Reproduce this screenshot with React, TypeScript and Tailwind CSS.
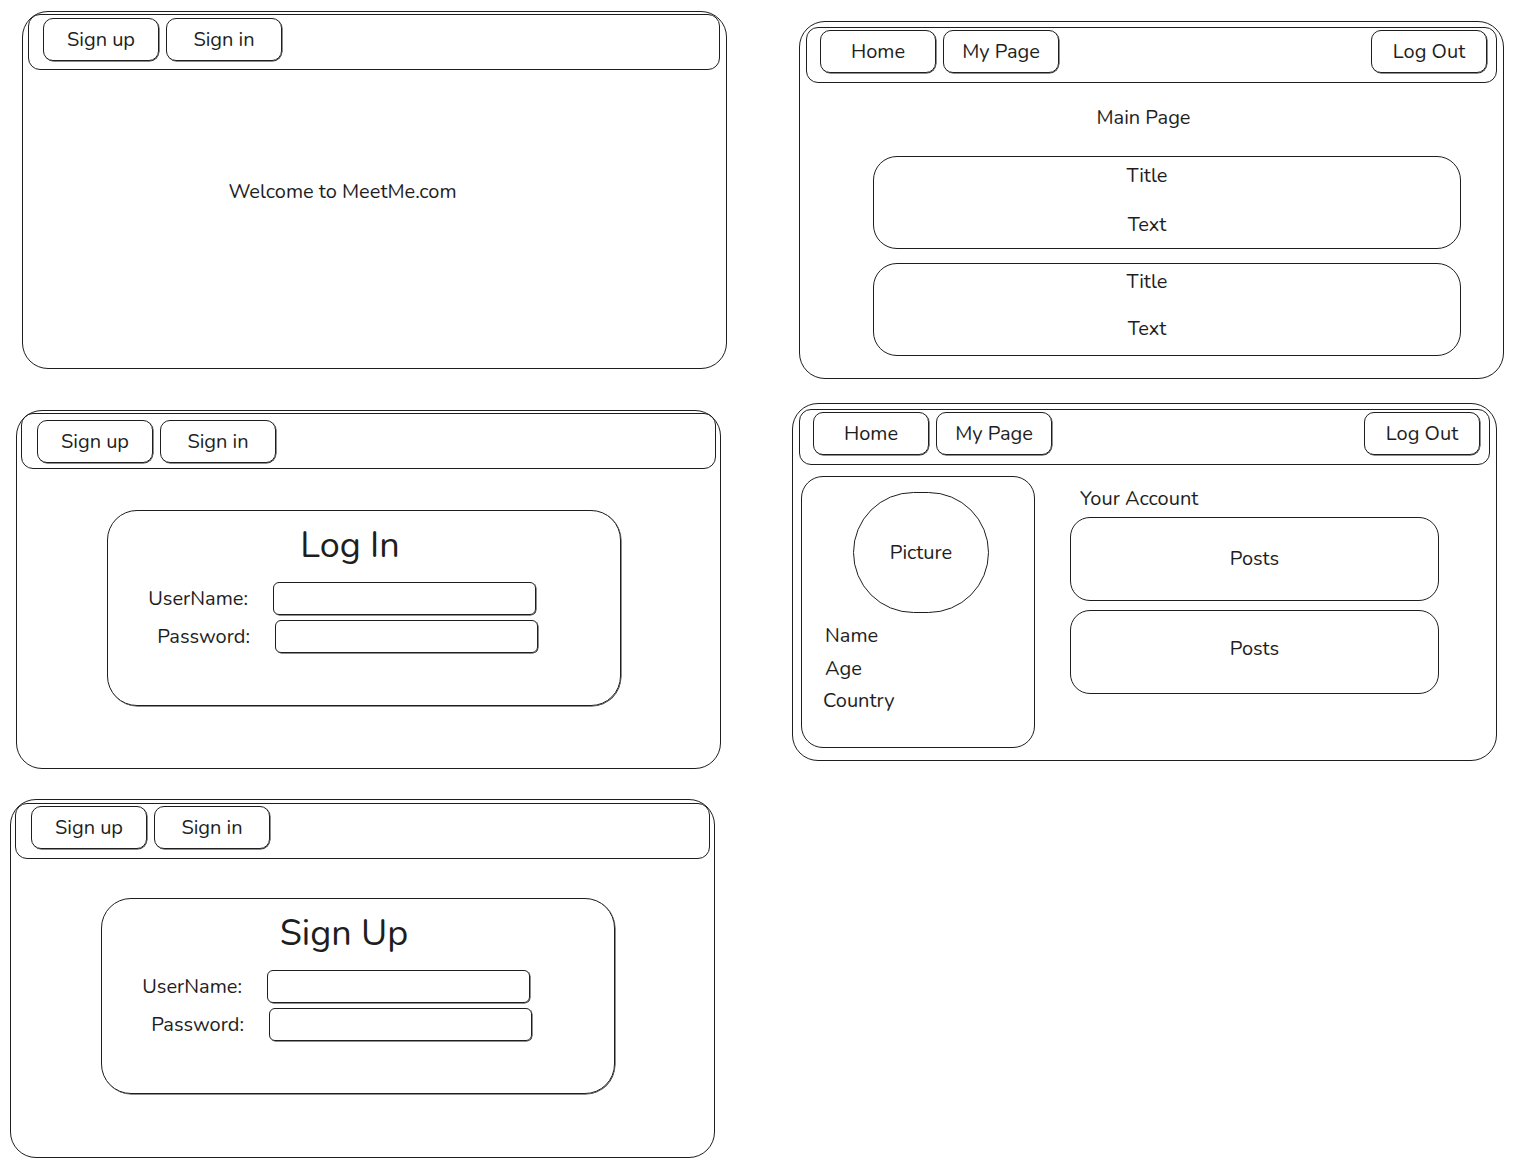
import React from "react";

const line = "border-[1.5px] border-[#1e1e1e]";

function NavButton({ label, className = "" }: { label: string; className?: string }) {
  return (
    <div
      className={`w-[116px] h-[43px] rounded-[10px] ${line} flex items-center justify-center text-[20px] shadow-[0.5px_0.5px_0_0_#1e1e1e] ${className}`}
    >
      {label}
    </div>
  );
}

function Field({ label, shift = false }: { label: string; shift?: boolean }) {
  return (
    <div className={`flex items-center ${shift ? "ml-[2px]" : ""}`}>
      <div className="w-[140px] text-right text-[20px] leading-[24px]">{label}</div>
      <div className={`ml-[25px] w-[263px] h-[33px] rounded-[6px] ${line} shadow-[0.5px_0.5px_0_0_#1e1e1e]`} />
    </div>
  );
}

function AuthCard({ title }: { title: string }) {
  return (
    <div className={`w-[514px] h-[196px] rounded-[30px] ${line} flex flex-col pt-[13px] shadow-[0.5px_0.5px_0_0_#1e1e1e]`}>
      <div className="text-center text-[36px] leading-[44px] pr-[28px]">{title}</div>
      <div className="mt-[14px] flex flex-col gap-[5px]">
        <Field label="UserName:" />
        <Field label="Password:" shift />
      </div>
    </div>
  );
}

function GuestNav({ top }: { top: string }) {
  return (
    <div className={`mx-[4px] h-[56px] rounded-[12px] ${line} flex items-start gap-[7px] px-[15px] ${top}`}>
      <NavButton label="Sign up" />
      <NavButton label="Sign in" />
    </div>
  );
}

function UserNav() {
  return (
    <div className={`mx-[6px] mt-[5px] h-[56px] rounded-[12px] ${line} flex items-start gap-[7px] pl-[13px] pr-[9px] pt-[2px]`}>
      <NavButton label="Home" />
      <NavButton label="My Page" />
      <NavButton label="Log Out" className="ml-auto" />
    </div>
  );
}

function PostCard({ title, first = false }: { title: string; first?: boolean }) {
  return (
    <div
      className={`w-[588px] h-[93px] rounded-[24px] ${line} flex flex-col items-center pr-[40px] text-[20px] leading-[26px] ${
        first ? "pt-[6px]" : "pt-[5px]"
      }`}
    >
      <div>{title}</div>
      <div className={first ? "mt-[23px]" : "mt-[21px]"}>Text</div>
    </div>
  );
}

export default function App() {
  return (
    <div
      className="relative w-[1514px] h-[1167px] bg-white text-[#1e1e1e] overflow-hidden"
      style={{ fontFamily: "Nunito, Lato, 'Noto Sans', sans-serif" }}
    >
      {/* Welcome */}
      <div className={`absolute left-[22px] top-[11px] w-[705px] h-[358px] rounded-[26px] ${line} flex flex-col`}>
        <div className={`ml-[5px] mr-[6px] mt-[2px] h-[56px] rounded-[12px] ${line} flex items-start gap-[7px] px-[14px] pt-[3px]`}>
          <NavButton label="Sign up" />
          <NavButton label="Sign in" />
        </div>
        <div className="pt-[108px] text-center text-[20px] leading-[28px] pr-[64px]">Welcome to MeetMe.com</div>
      </div>

      {/* Main page */}
      <div className={`absolute left-[799px] top-[21px] w-[705px] h-[358px] rounded-[26px] ${line} flex flex-col`}>
        <UserNav />
        <div className="mt-[22px] text-center text-[20px] leading-[26px] ml-[-16px]">Main Page</div>
        <div className="ml-[73px] mt-[25px] flex flex-col gap-[14px]">
          <PostCard title="Title" first />
          <PostCard title="Title" />
        </div>
      </div>

      {/* Log in */}
      <div className={`absolute left-[16px] top-[410px] w-[705px] h-[359px] rounded-[26px] ${line} flex flex-col`}>
        <GuestNav top="mt-[2px] pt-[6px]" />
        <div className="ml-[90px] mt-[41px]">
          <AuthCard title="Log In" />
        </div>
      </div>

      {/* My page */}
      <div className={`absolute left-[792px] top-[403px] w-[705px] h-[358px] rounded-[26px] ${line} flex flex-col`}>
        <UserNav />
        <div className="flex mt-[11px] ml-[8px]">
          <div className={`w-[234px] h-[272px] rounded-[22px] ${line} flex flex-col`}>
            <div
              className={`ml-[51px] mt-[15px] w-[136px] h-[121px] rounded-full ${line} flex items-center justify-center text-[20px]`}
            >
              Picture
            </div>
            <div className="ml-[23px] mt-[7px] flex flex-col text-[20px] leading-[32px] gap-[1px]">
              <div>Name</div>
              <div>Age</div>
              <div className="-ml-[2px] -mt-[1px]">Country</div>
            </div>
          </div>
          <div className="ml-[35px] flex flex-col">
            <div className="ml-[10px] mt-[10px] text-[20px] leading-[26px]">Your Account</div>
            <div className="mt-[5px] flex flex-col gap-[9px]">
              <div className={`w-[369px] h-[84px] rounded-[20px] ${line} flex items-center justify-center text-[20px]`}>
                Posts
              </div>
              <div className={`w-[369px] h-[84px] rounded-[20px] ${line} flex items-center justify-center text-[20px] pb-[6px]`}>
                Posts
              </div>
            </div>
          </div>
        </div>
      </div>

      {/* Sign up */}
      <div className={`absolute left-[10px] top-[799px] w-[705px] h-[359px] rounded-[26px] ${line} flex flex-col`}>
        <GuestNav top="mt-[3px] pt-[2px]" />
        <div className="ml-[90px] mt-[39px]">
          <AuthCard title="Sign Up" />
        </div>
      </div>
    </div>
  );
}
